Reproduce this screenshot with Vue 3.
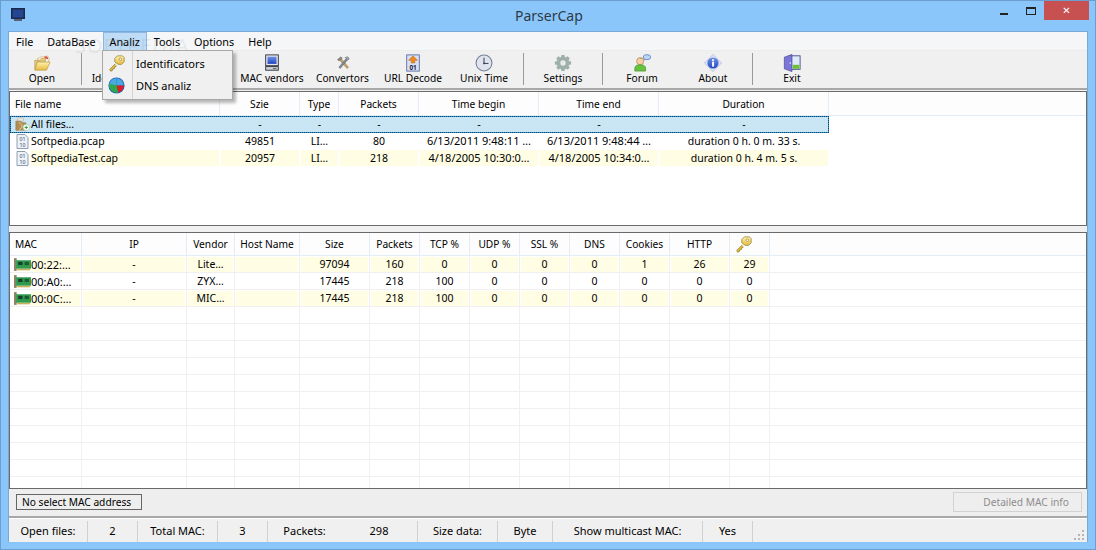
<script setup>
const menus = ['File', 'DataBase', 'Analiz', 'Tools', 'Options', 'Help']

const tools = [
  { label: 'Open', icon: 'i-open', cls: 'w-open' },
  { sep: true, cls: 's1' },
  { label: 'Identificators', icon: 'i-key', cls: 'w-ident' },
  { spacer: true },
  { label: 'MAC vendors', icon: 'i-monitor', cls: 'w-mac' },
  { label: 'Convertors', icon: 'i-tools', cls: 'w-conv' },
  { label: 'URL Decode', icon: 'i-url', cls: 'w-url' },
  { label: 'Unix Time', icon: 'i-clock', cls: 'w-unix' },
  { sep: true, cls: 's2' },
  { label: 'Settings', icon: 'i-gear', cls: 'w-set' },
  { sep: true, cls: 's0' },
  { label: 'Forum', icon: 'i-forum', cls: 'w-set' },
  { label: 'About', icon: 'i-about', cls: 'w-about' },
  { sep: true, cls: 's3' },
  { label: 'Exit', icon: 'i-exit', cls: 'w-set' }
]

const fileHead = ['File name', 'Szie', 'Type', 'Packets', 'Time begin', 'Time end', 'Duration']
const fileRows = [
  { icon: 'i-folder', state: 'selected', cells: ['All files…', '-', '-', '-', '-', '-', '-'] },
  { icon: 'i-bin', state: '', cells: ['Softpedia.pcap', '49851', 'LI…', '80', '6/13/2011 9:48:11 …', '6/13/2011 9:48:44 …', 'duration 0 h. 0 m. 33 s.'] },
  { icon: 'i-bin', state: 'yellow', cells: ['SoftpediaTest.cap', '20957', 'LI…', '218', '4/18/2005 10:30:0…', '4/18/2005 10:34:0…', 'duration 0 h. 4 m. 5 s.'] }
]

const macHead = ['MAC', 'IP', 'Vendor', 'Host Name', 'Size', 'Packets', 'TCP %', 'UDP %', 'SSL %', 'DNS', 'Cookies', 'HTTP', '']
const macRows = [
  { state: 'yellow', cells: ['00:22:…', '-', 'Lite…', '', '97094', '160', '0', '0', '0', '0', '1', '26', '29'] },
  { state: '', cells: ['00:A0:…', '-', 'ZYX…', '', '17445', '218', '100', '0', '0', '0', '0', '0', '0'] },
  { state: 'yellow', cells: ['00:0C:…', '-', 'MIC…', '', '17445', '218', '100', '0', '0', '0', '0', '0', '0'] }
]
const emptyRows = Array.from({ length: 11 }, (_, i) => i)

const status = [
  { text: 'Open files:', cls: 'st-a' }, { text: '2', cls: 'st-b' },
  { text: 'Total MAC:', cls: 'st-c' }, { text: '3', cls: 'st-b' },
  { text: 'Packets:', cls: 'st-d' }, { text: '298', cls: 'st-e' },
  { text: 'Size data:', cls: 'st-f' }, { text: 'Byte', cls: 'st-g' },
  { text: 'Show multicast MAC:', cls: 'st-h' }, { text: 'Yes', cls: 'st-b' }
]
</script>

<template>
  <div class="window">
    <svg class="defs" width="0" height="0">
      <defs>
        <linearGradient id="gy" x1="0" y1="0" x2="0" y2="1"><stop offset="0" stop-color="#fff2a8"/><stop offset="1" stop-color="#e8bb3e"/></linearGradient>
        <linearGradient id="gb" x1="0" y1="0" x2="0" y2="1"><stop offset="0" stop-color="#6f8fe8"/><stop offset="1" stop-color="#2347c0"/></linearGradient>
        <symbol id="i-app" viewBox="0 0 16 16">
          <rect x="1" y="1" width="14" height="11" fill="#1b2a4a"/><rect x="2.500" y="2.500" width="11" height="8" fill="#24458f"/><rect x="4" y="12" width="8" height="2" fill="#596272"/>
        </symbol>
        <symbol id="i-open" viewBox="0 0 20 20">
          <path d="M5 5l5-2 3 1 3-2 2 3-1 4H6z" fill="#fff" stroke="#c9a35a" stroke-width=".7"/>
          <path d="M12 2.500l4 .5 1 3-3-1z" fill="#d9483b"/>
          <path d="M2 7h5l2-2h5v3H5L2 17z" fill="#e9cf7d" stroke="#b8964a" stroke-width=".7"/>
          <path d="M5 9h14l-4 9H2z" fill="url(#gy)" stroke="#b8964a" stroke-width=".7"/>
        </symbol>
        <symbol id="i-key" viewBox="0 0 20 20">
          <path d="M8.500 10.500L2 17l1 2 2-.5.500-2 2-.5.500-2 2-1" fill="#e0ba3a" stroke="#8a7326" stroke-width=".8"/>
          <path d="M8 4l3-3h6l2 2v5l-3 3h-4l-4-3z" fill="url(#gy)" stroke="#8a7326" stroke-width=".8"/>
          <circle cx="14.500" cy="5" r="1.500" fill="#fff" stroke="#8a7326" stroke-width=".7"/>
        </symbol>
        <symbol id="i-pie" viewBox="0 0 20 20">
          <circle cx="10" cy="10" r="9.500" fill="#1e5fc0"/>
          <path d="M10 10V1.500A8.500 8.500 0 0 1 18.500 10z" fill="#49a8de"/>
          <path d="M10 10V1.500A8.500 8.500 0 0 0 2 13z" fill="#49a8de"/>
          <path d="M10 10h8.500A8.500 8.500 0 0 1 12 18.300z" fill="#e11b22"/>
          <path d="M10 10l2 8.300A8.500 8.500 0 0 1 1.800 8z" fill="#2fa84a"/>
        </symbol>
        <symbol id="i-monitor" viewBox="0 0 20 20">
          <rect x="3" y="1" width="14" height="12" fill="#e4e8ee" stroke="#2a2a33"/>
          <rect x="5" y="3" width="10" height="8" fill="url(#gb)"/>
          <rect x="3" y="14" width="14" height="4" fill="#cfd3d8" stroke="#2a2a33"/>
          <rect x="11" y="15.500" width="4" height="1" fill="#555"/>
        </symbol>
        <symbol id="i-tools" viewBox="-3 -3 26 26">
          <path d="M4 5l3-2 11 13-2 2z" fill="#c9a56b" stroke="#7a5f38" stroke-width=".6"/>
          <path d="M2 5l5-4 2 2-5 4z" fill="#8d8d8d" stroke="#555" stroke-width=".6"/>
          <path d="M15 3l2 2-11 13-2-2z" fill="#7f8a94" stroke="#4a4f55" stroke-width=".6"/>
          <path d="M13 2l4-1 2 3-2 2-2-2z" fill="#a2a9b0" stroke="#4a4f55" stroke-width=".6"/>
        </symbol>
        <symbol id="i-url" viewBox="0 0 20 20">
          <rect x="3" y="1" width="14" height="18" fill="#d7e0f4" stroke="#5b6ea8"/>
          <path d="M10 2l5 5h-3v3H8V7H5z" fill="#f08a1c" stroke="#b75e0a" stroke-width=".5"/>
          <text x="10" y="17.500" font-size="7" font-weight="700" text-anchor="middle" fill="#223">01</text>
        </symbol>
        <symbol id="i-clock" viewBox="0 0 20 20">
          <circle cx="10" cy="10" r="8.800" fill="#dfe4ee" stroke="#77809a" stroke-width="1.200"/>
          <path d="M10 4v6.500h5" fill="none" stroke="#3a3f52" stroke-width="1.100"/>
          <circle cx="10" cy="10.500" r="1" fill="#3a3f52"/>
        </symbol>
        <symbol id="i-gear" viewBox="0 0 20 20">
          <g fill="#9fb0ab">
            <circle cx="10" cy="10" r="7"/>
            <rect x="8" y="1" width="4" height="18" rx="1"/>
            <rect x="1" y="8" width="18" height="4" rx="1"/>
            <rect x="8" y="1" width="4" height="18" rx="1" transform="rotate(45 10 10)"/>
            <rect x="8" y="1" width="4" height="18" rx="1" transform="rotate(-45 10 10)"/>
          </g>
          <circle cx="10" cy="10" r="3" fill="#e7ebe9"/>
        </symbol>
        <symbol id="i-forum" viewBox="0 0 20 20">
          <ellipse cx="15.500" cy="3.500" rx="4.200" ry="2.800" fill="#bcd7f5" stroke="#4a74b4" stroke-width=".8"/>
          <path d="M12 6l-1.500 2 3-1.500z" fill="#4a74b4"/>
          <circle cx="8" cy="8" r="4" fill="#f5cfa6" stroke="#a77a4c" stroke-width=".7"/>
          <path d="M7 5q2-2 4 .5-3 .5-4-.5z" fill="#c8a06a"/>
          <path d="M2 19v-3q0-4 6-4t6 4v3z" fill="#68c23f" stroke="#3d8f20" stroke-width=".7"/>
        </symbol>
        <symbol id="i-about" viewBox="0 0 20 20">
          <path d="M10 .5l9.500 9.500-9.500 9.500L.5 10z" fill="#dbe4f5" stroke="#9fb0d6" stroke-width=".7"/>
          <circle cx="10" cy="10" r="6.200" fill="url(#gb)"/>
          <rect x="9" y="8.500" width="2.200" height="5.500" fill="#fff"/>
          <rect x="9" y="5.800" width="2.200" height="1.900" fill="#fff"/>
        </symbol>
        <symbol id="i-exit" viewBox="0 0 20 20">
          <rect x="7" y="2" width="12" height="15" fill="#dceaf8" stroke="#4a4a90"/>
          <rect x="11" y="12" width="7" height="4.500" fill="#6ec32d"/>
          <path d="M1.500 3.500L10 .5v19l-8.500-3z" fill="#7a75d6" stroke="#3f3c96" stroke-width=".7"/>
          <rect x="7.500" y="9" width="1.200" height="2" fill="#e5e5ff"/>
        </symbol>
        <symbol id="i-folder" viewBox="0 0 18 16">
          <rect x="3" y="0" width="7" height="4" fill="#e8e4d6" stroke="#aaa" stroke-width=".6"/>
          <path d="M1 4h6l2 2h4v9H1z" fill="#b18f52" stroke="#8a6d3a" stroke-width=".6"/>
          <path d="M5 5l4 5-4 5" fill="none" stroke="#d6bf8e" stroke-width="1.300"/>
          <circle cx="13.500" cy="11.500" r="3.800" fill="#fff" stroke="#8bb58b" stroke-width=".6"/>
          <path d="M13.500 9.500v4M11.500 11.500h4" stroke="#2f9e3a" stroke-width="1.200"/>
        </symbol>
        <symbol id="i-bin" viewBox="0 0 14 15">
          <path d="M1.500 .5h8l3 3v11h-11z" fill="#edf2f8" stroke="#8f9fb2"/>
          <text x="7" y="7" font-size="5.200" text-anchor="middle" fill="#2d3f66">01</text>
          <text x="7" y="13" font-size="5.200" text-anchor="middle" fill="#2d3f66">10</text>
        </symbol>
        <symbol id="i-card" viewBox="0 0 16 12">
          <rect x="0" y="0" width="2.500" height="12" fill="#8b8467"/>
          <rect x="2" y="2" width="14" height="8" fill="#2e9b50"/>
          <rect x="4" y="3.500" width="4" height="3" fill="#163f27"/>
          <rect x="10" y="3.500" width="4" height="3" fill="#1c5a33"/>
          <rect x="3" y="10" width="12" height="1.500" fill="#c5b35c"/>
        </symbol>
      </defs>
    </svg>

    <header class="titlebar">
      <svg class="app-icon"><use href="#i-app"/></svg>
      <span class="title">ParserCap</span>
      <div class="caption">
        <span class="min"></span>
        <span class="max"></span>
        <span class="close">✕</span>
      </div>
    </header>

    <div class="client">
      <nav class="menubar">
        <span v-for="m in menus" :key="m" class="menu" :class="{ active: m === 'Analiz' }">{{ m }}</span>
        <span class="watermark">SOFTPEDIA</span>
      </nav>

      <div class="toolbar">
        <template v-for="(t, i) in tools" :key="i">
          <span v-if="t.sep" class="sep" :class="t.cls"></span>
          <span v-else-if="t.spacer" class="spacer"></span>
          <div v-else class="tool" :class="t.cls">
            <svg class="tool-icon"><use :href="'#' + t.icon"/></svg>
            <span>{{ t.label }}</span>
          </div>
        </template>
      </div>

      <div class="menu-pop">
        <div class="pop-item"><svg class="pop-icon"><use href="#i-key"/></svg><span>Identificators</span></div>
        <div class="pop-item"><svg class="pop-icon"><use href="#i-pie"/></svg><span>DNS analiz</span></div>
      </div>

      <section class="panel files">
        <div class="grid-row head cols-file">
          <div v-for="h in fileHead" :key="h" class="hc">{{ h }}</div>
        </div>
        <div v-for="r in fileRows" :key="r.cells[0]" class="grid-row cols-file body-file" :class="r.state">
          <div v-for="(c, i) in r.cells" :key="i" class="cell" :class="{ first: i === 0, wide: i === 4 || i === 5 }">
            <svg v-if="i === 0" class="row-icon"><use :href="'#' + r.icon"/></svg>
            <span class="cell-text" :class="{ tint: r.state === 'yellow' }">{{ c }}</span>
          </div>
        </div>
      </section>

      <section class="panel macs">
        <div class="grid-row head cols-mac">
          <div v-for="(h, i) in macHead" :key="i" class="hc">
            <svg v-if="i === 12" class="head-key"><use href="#i-key"/></svg>
            <template v-else>{{ h }}</template>
          </div>
        </div>
        <div v-for="r in macRows" :key="r.cells[0]" class="line">
          <div class="grid-row cols-mac body-mac" :class="r.state">
            <div v-for="(c, i) in r.cells" :key="i" class="cell" :class="{ first: i === 0, wide: i === 0 }">
              <svg v-if="i === 0" class="card-icon"><use href="#i-card"/></svg>
              <span class="cell-text" :class="{ tint: r.state === 'yellow' }">{{ c }}</span>
            </div>
          </div>
        </div>
        <div v-for="n in emptyRows" :key="n" class="line">
          <div class="grid-row cols-mac body-mac">
            <div v-for="(h, i) in macHead" :key="i" class="cell"></div>
          </div>
        </div>
      </section>

      <div class="detail-bar">
        <span class="hint">No select MAC address</span>
        <span class="detail-btn">Detailed MAC info</span>
      </div>

      <footer class="statusbar">
        <span v-for="s in status" :key="s.text" class="st" :class="s.cls">{{ s.text }}</span>
        <svg class="grip" width="12" height="12" viewBox="0 0 12 12">
          <g fill="#b5b5b5">
            <rect x="8" y="0" width="2" height="2"/><rect x="4" y="4" width="2" height="2"/><rect x="8" y="4" width="2" height="2"/>
            <rect x="0" y="8" width="2" height="2"/><rect x="4" y="8" width="2" height="2"/><rect x="8" y="8" width="2" height="2"/>
          </g>
        </svg>
      </footer>
    </div>
  </div>
</template>

<style>
html, body { margin: 0; background: #8bc6fa; }
</style>

<style scoped>
.window {
  width: 1096px;
  height: 550px;
  box-sizing: border-box;
  background: #8bc6fa;
  border: 1px solid #6b9ecf;
  display: flex;
  flex-direction: column;
  padding: 0 7px 7px;
  font-family: "Noto Sans", "Liberation Sans", sans-serif;
  font-size: 10.5px;
  color: #000;
  overflow: hidden;
}
.defs { position: absolute; }
.titlebar {
  height: 30px;
  flex: none;
  display: flex;
  align-items: flex-start;
  position: relative;
}
.app-icon { width: 16px; height: 16px; margin: 6px 0 0 2px; }
.title {
  position: absolute;
  left: 507px;
  top: 5px;
  font-size: 14px;
  line-height: 20px;
  color: #2c3a48;
}
.caption { position: absolute; right: -1px; top: 0; display: flex; align-items: flex-start; }
.min { width: 8px; height: 2px; background: #222; margin: 12px 18px 0 0; }
.max { width: 8px; height: 5px; border: 1px solid #222; border-top-width: 2px; margin: 6px 8px 0 0; }
.close {
  width: 45px;
  height: 19px;
  background: #c75050;
  color: #fff;
  font-size: 10px;
  line-height: 19px;
  text-align: center;
  font-weight: 700;
  font-family: "DejaVu Sans", sans-serif;
}
.client {
  flex: 1;
  min-height: 0;
  display: flex;
  flex-direction: column;
  background: #f0f0f0;
  position: relative;
  border: 1px solid #78a9d8;
  border-bottom: 0;
}
.menubar {
  height: 18px;
  flex: none;
  display: flex;
  background: #f5f6f7;
  position: relative;
  font-size: 10.8px;
  box-sizing: border-box;
}
.menu { padding: 0 6px; line-height: 17px; height: 17px; border: 1px solid transparent; border-bottom: 0; }
.menu.active { background: #bfdcf6; border-color: #8bb7e2; }
.watermark {
  position: absolute;
  left: 66px;
  top: 3px;
  font-size: 20px;
  line-height: 22px;
  letter-spacing: 1px;
  color: rgba(120, 125, 130, .12);
  pointer-events: none;
  z-index: 1;
}
.toolbar {
  height: 40px;
  flex: none;
  display: flex;
  align-items: flex-start;
  border-top: 1px solid #ececec;
  border-bottom: 2px solid #a8a8a8;
  box-sizing: border-box;
  padding-left: 3px;
  background: #f0f0f0;
  font-size: 10.2px;
}
.tool {
  flex: none;
  display: flex;
  flex-direction: column;
  align-items: center;
  padding-top: 3px;
  white-space: nowrap;
  line-height: 13px;
}
.tool-icon { width: 18px; height: 18px; }
.sep { flex: none; width: 1px; height: 32px; margin-top: 2px; background: #9a9a9a; }
.spacer { flex: none; width: 71px; }
.w-open { width: 60px; }
.w-ident { width: 83px; }
.w-mac { width: 72px; }
.w-conv { width: 69px; }
.w-url { width: 72px; }
.w-unix { width: 70px; }
.w-set { width: 78px; }
.w-about { width: 64px; }
.s1 { margin-left: 9px; }
.s2 { margin-left: 4px; }
.s0 { margin-left: 0; }
.s3 { margin-left: 7px; }

.menu-pop {
  position: absolute;
  left: 93px;
  top: 18px;
  width: 131px;
  height: 50px;
  box-sizing: border-box;
  background: #f0f0f0;
  border: 1px solid #a8a8a8;
  box-shadow: 3px 3px 3px rgba(0, 0, 0, .28);
  padding: 1px 0;
  z-index: 5;
  font-size: 11px;
  background-image: linear-gradient(#d4d4d4, #d4d4d4);
  background-size: 1px 100%;
  background-position: 29px 0;
  background-repeat: no-repeat;
}
.pop-item { height: 22px; display: flex; align-items: center; }
.pop-icon { width: 17px; height: 17px; margin: 0 11px 0 5px; flex: none; }

.panel {
  flex: none;
  box-sizing: border-box;
  background: #fff;
  border: 1px solid #6a6a6a;
  overflow: hidden;
  width: 1078px;
}
.files { height: 135px; margin-top: 1px; }
.macs { height: 257px; margin-top: 6px; }
.grid-row { display: grid; }
.cols-file { grid-template-columns: 210px 80px 39px 80px 120px 120px 170px; }
.cols-mac { grid-template-columns: 72px 105px 48px 65px 70px 50px 50px 50px 50px 50px 50px 60px 40px; }
.head {
  height: 24px;
  background: #fdfdfe;
  border-bottom: 1px solid #e4edf7;
  box-sizing: border-box;
  font-size: 10.2px;
}
.macs .head { height: 23px; }
.hc {
  line-height: 22px;
  border-right: 1px solid #e4edf7;
  box-sizing: border-box;
  white-space: nowrap;
  overflow: hidden;
  display: flex;
  justify-content: center;
  align-items: center;
}
.hc:first-child { justify-content: flex-start; padding-left: 5px; }
.head-key { width: 17px; height: 17px; margin-right: 12px; }
.cell {
  height: 17px;
  line-height: 17px;
  display: flex;
  align-items: center;
  justify-content: center;
  box-sizing: border-box;
  white-space: nowrap;
  overflow: hidden;
  padding-bottom: 1px;
}
.cell.first { justify-content: flex-start; padding-left: 5px; }
.cell.wide { font-size: 11px; }
.cell-text { flex: 1; text-align: center; height: 16px; line-height: 16px; margin: 0 1px; }
.first .cell-text { text-align: left; margin-left: 0; }
.yellow .cell-text.tint { background: #fffde3; }
.row-icon { width: 15px; height: 15px; margin-right: 1px; flex: none; }
.card-icon { width: 17px; height: 13px; flex: none; }

.body-file { width: 819px; }
.body-file.selected {
  background: #cae6f5;
  outline: 1px dotted #0a3d66;
  outline-offset: -1px;
  box-shadow: inset 0 0 0 1px #2b9bd8;
}
.line { border-bottom: 1px solid #f0f0f0; height: 17px; box-sizing: border-box; }
.body-mac { width: 760px; }
.body-mac .cell { height: 16px; border-right: 1px solid #f0f0f0; padding-bottom: 0; }
.body-mac .cell.first { padding-left: 4px; }
.body-mac .cell-text { height: 15px; line-height: 15px; }

.detail-bar {
  height: 29px;
  flex: none;
  display: flex;
  align-items: center;
  justify-content: space-between;
  padding: 0 5px 2px 7px;
  box-sizing: border-box;
  border-bottom: 2px solid #a8a8a8;
  background: #eee;
}
.hint {
  border: 1px solid #666;
  height: 14px;
  line-height: 14px;
  width: 119px;
  padding-left: 5px;
  font-size: 10.2px;
}
.detail-btn {
  width: 115px;
  height: 18px;
  line-height: 19px;
  border: 1px solid #d2d2d2;
  color: #8d8d8d;
  text-align: right;
  padding-right: 12px;
  font-size: 10.2px;
}
.statusbar {
  flex: 1;
  display: flex;
  position: relative;
  background: #f0f0f0;
  border-top: 1px solid #fff;
  padding-top: 2px;
  align-items: flex-start;
  font-size: 11px;
}
.st {
  flex: none;
  height: 21px;
  line-height: 19px;
  border-right: 1px solid #d0d0d0;
  box-sizing: border-box;
  text-align: center;
  white-space: nowrap;
}
.st-a { width: 79px; }
.st-b { width: 50px; }
.st-c { width: 80px; }
.st-d { width: 73px; border-right: 0; }
.st-e { width: 77px; }
.st-f { width: 80px; }
.st-g { width: 55px; }
.st-h { width: 150px; }
.grip { position: absolute; right: 1px; bottom: 0; }
</style>
